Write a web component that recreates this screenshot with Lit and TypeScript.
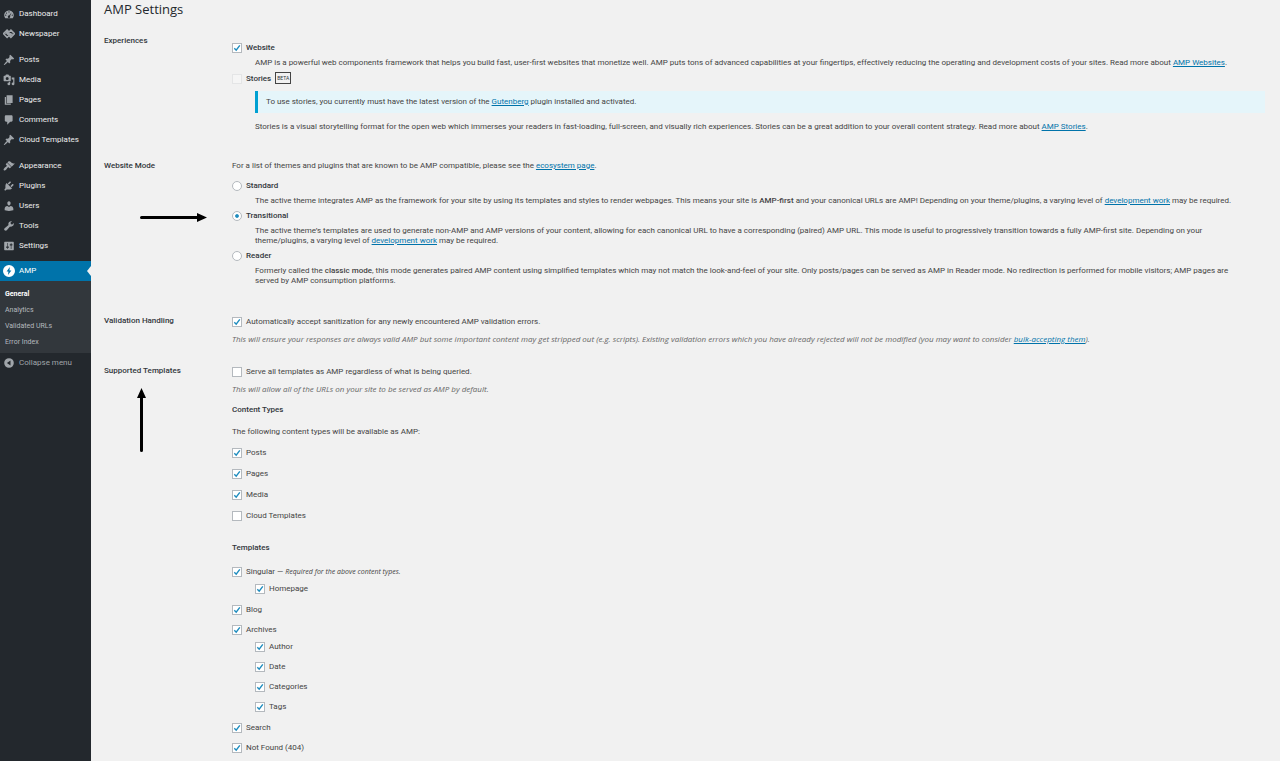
import { LitElement, html, svg, css } from "lit";
import { customElement, property } from "lit/decorators.js";

const icons: Record<string, unknown> = {
  dashboard: svg`<path fill-rule="evenodd" d="M3.76 17h12.48c1.1-1.37 1.76-3.11 1.76-5 0-4.42-3.58-8-8-8s-8 3.58-8 8c0 1.89.66 3.63 1.76 5zM10 5.5a1 1 0 1 1 0 2 1 1 0 0 1 0-2zM5.8 7.5a1 1 0 1 1 0 2 1 1 0 0 1 0-2zM4.5 11a1 1 0 1 1 0 2 1 1 0 0 1 0-2zM15.5 11a1 1 0 1 1 0 2 1 1 0 0 1 0-2zM14.4 7.6l-2.7 5.9a2 2 0 1 1-1.5-.9z"/>`,
  newspaper: svg`<g fill="none" stroke="currentColor" stroke-width="2.6"><path d="M6.8 3.5l6 6-6 6-6-6zM13.2 3.5l6 6-6 6-6-6z"/><path d="M4 9.5l3-3 6 6 3-3"/></g>`,
  pin: svg`<path d="M10.44 3.02l1.82-1.82 6.36 6.35-1.83 1.82c-1.05-.68-2.48-.57-3.41.36l-.75.75c-.92.93-1.04 2.35-.35 3.41l-1.83 1.82-2.41-2.41-2.8 2.79c-.42.42-3.38 2.71-3.8 2.29s1.86-3.39 2.28-3.81l2.79-2.79L4.1 9.36l1.83-1.82c1.05.69 2.48.57 3.4-.36l.75-.75c.93-.92 1.05-2.35.36-3.41z"/>`,
  media: svg`<path fill-rule="evenodd" d="M13 11V4c0-.55-.45-1-1-1h-1.67L9 1H5L3.67 3H2c-.55 0-1 .45-1 1v7c0 .55.45 1 1 1h10c.55 0 1-.45 1-1zM7 5a2.500 2.500 0 1 1 0 5 2.500 2.500 0 0 1 0-5z"/><path d="M14.500 6H19v10.500a2.300 2.300 0 1 1-2-2.300V9h-2.500zM10 14V13h2v3.500a2.300 2.300 0 1 1-2-2.300z"/>`,
  page: svg`<path d="M6 15V2h10v13H6zm-1 1h8v2H3V5h2v11z"/>`,
  comment: svg`<path d="M5 2h9c1.1 0 2 .9 2 2v7c0 1.1-.9 2-2 2h-2l-5 5v-5H5c-1.1 0-2-.9-2-2V4c0-1.1.9-2 2-2z"/>`,
  brush: svg`<path d="M14.48 11.06L7.41 3.99l1.5-1.5c.5-.56 2.3-.47 3.51.32 1.21.8 1.43 1.28 2.91 2.1 1.18.64 2.45 1.26 4.45.85zm-.71.71L6.7 4.7 4.93 6.47c-.39.39-.39 1.02 0 1.41l1.06 1.06c.39.39.39 1.03 0 1.42-.6.6-1.43 1.11-2.21 1.69-.35.26-.7.53-1.01.84C1.43 14.23.4 16.08 1.4 17.07c.99 1 2.84-.03 4.18-1.36.31-.31.58-.66.85-1.02.57-.78 1.08-1.61 1.69-2.21.39-.39 1.02-.39 1.41 0l1.06 1.06c.39.39 1.02.39 1.41 0z"/>`,
  plug: svg`<path d="M13.11 4.36L9.87 7.6 8 5.73l3.24-3.24c.35-.34 1.05-.2 1.56.32.52.51.66 1.21.31 1.55zm-8 1.77l.91-1.12 9.01 9.01-1.19.84c-.71.71-2.63 1.16-3.82 1.16H6.14L4.9 17.26c-.59.59-1.54.59-2.12 0-.59-.58-.59-1.53 0-2.12l1.24-1.24v-3.88c0-1.13.4-3.19 1.09-3.89zm7.26 3.97l3.24-3.24c.34-.35 1.04-.21 1.55.31.52.51.66 1.21.31 1.55l-3.24 3.25z"/>`,
  user: svg`<path d="M10 9.25c-2.27 0-2.73-3.44-2.73-3.44C7 4.02 7.82 2 9.97 2c2.16 0 2.98 2.02 2.71 3.81 0 0-.41 3.44-2.68 3.44zm0 2.57L12.72 10c2.39 0 4.52 2.33 4.52 4.53v2.49s-3.65 1.13-7.24 1.13c-3.65 0-7.24-1.13-7.24-1.13v-2.49c0-2.25 1.94-4.48 4.47-4.48z"/>`,
  wrench: svg`<path d="M16.68 9.77c-1.34 1.34-3.3 1.67-4.95.99l-5.41 6.52c-.99.99-2.59.99-3.58 0s-.99-2.59 0-3.57l6.52-5.42c-.68-1.65-.35-3.61.99-4.95 1.28-1.28 3.12-1.62 4.72-1.06l-2.89 2.89 2.82 2.82 2.86-2.87c.53 1.58.18 3.39-1.08 4.65z"/>`,
  sliders: svg`<path fill-rule="evenodd" d="M18 16V4c0-.55-.45-1-1-1H3c-.55 0-1 .45-1 1v12c0 .55.45 1 1 1h14c.55 0 1-.45 1-1zM8 11h1c.55 0 1 .45 1 1s-.45 1-1 1H8v1.5c0 .28-.22.5-.5.5s-.5-.22-.5-.5V13H6c-.55 0-1-.45-1-1s.45-1 1-1h1V5.5c0-.28.22-.5.5-.5s.5.22.5.5V11zm5-2h-1c-.55 0-1-.45-1-1s.45-1 1-1h1V5.5c0-.28.22-.5.5-.5s.5.22.5.5V7h1c.55 0 1 .45 1 1s-.45 1-1 1h-1v5.5c0 .28-.22.5-.5.5s-.5-.22-.5-.5V9z"/>`,
  amp: svg`<path fill-rule="evenodd" d="M10 0a10 10 0 1 1 0 20 10 10 0 0 1 0-20zm1.4 3.5L6 11h3l-.7 5.5L14 9h-3.2z"/>`,
  collapse: svg`<path fill-rule="evenodd" d="M10 2a8 8 0 1 1 0 16 8 8 0 0 1 0-16zm2.5 4L6.5 10l6 4z"/>`,
};

const menu: { icon: string; label: string }[][] = [
  [
    { icon: "dashboard", label: "Dashboard" },
    { icon: "newspaper", label: "Newspaper" },
  ],
  [
    { icon: "pin", label: "Posts" },
    { icon: "media", label: "Media" },
    { icon: "page", label: "Pages" },
    { icon: "comment", label: "Comments" },
    { icon: "pin", label: "Cloud Templates" },
  ],
  [
    { icon: "brush", label: "Appearance" },
    { icon: "plug", label: "Plugins" },
    { icon: "user", label: "Users" },
    { icon: "wrench", label: "Tools" },
    { icon: "sliders", label: "Settings" },
  ],
];

const icon = (name: string) =>
  html`<svg class="icon" viewBox="0 0 20 20" fill="currentColor" aria-hidden="true">${icons[name]}</svg>`;

@customElement("admin-menu")
class AdminMenu extends LitElement {
  static styles = css`
    :host {
      display: block;
      padding-top: 4px;
      background: #23282d;
      color: #eee;
      font-size: 8px;
      line-height: 20px;
    }
    .group + .group {
      margin-top: 6px;
    }
    .item {
      display: flex;
      align-items: center;
      gap: 4px;
      height: 20px;
      padding: 0 0 0 3px;
      color: inherit;
      text-decoration: none;
      white-space: nowrap;
    }
    .icon {
      flex: none;
      width: 12px;
      height: 12px;
      color: #a0a5aa;
    }
    .current {
      position: relative;
      margin-top: 5px;
      background: #0073aa;
      color: #fff;
    }
    .current .icon {
      color: #fff;
    }
    .current::after {
      content: "";
      position: absolute;
      right: 0;
      top: 5px;
      border: 5px solid transparent;
      border-left-width: 0;
      border-right: 4px solid #f1f1f1;
    }
    .submenu {
      padding: 5px 0 3px;
      background: #32373c;
      line-height: 16px;
    }
    .sub {
      display: block;
      padding-left: 5px;
      color: #b4b9be;
      font-size: 7px;
      text-decoration: none;
    }
    .sub.active {
      color: #fff;
      font-weight: 700;
    }
    .collapse {
      width: 100%;
      border: 0;
      background: none;
      color: #a0a5aa;
      font: inherit;
    }
  `;

  render() {
    return html`
      <nav>
        ${menu.map(
          (group) => html`<div class="group">
            ${group.map((m) => html`<a class="item" href="#">${icon(m.icon)}<span>${m.label}</span></a>`)}
          </div>`
        )}
        <a class="item current" href="#">${icon("amp")}<span>AMP</span></a>
        <div class="submenu">
          ${["General", "Analytics", "Validated URLs", "Error Index"].map(
            (label, i) => html`<a class="sub ${i === 0 ? "active" : ""}" href="#">${label}</a>`
          )}
        </div>
        <button class="item collapse" type="button">${icon("collapse")}<span>Collapse menu</span></button>
      </nav>
    `;
  }
}

@customElement("choice-field")
class ChoiceField extends LitElement {
  @property() type = "checkbox";
  @property({ type: Boolean }) checked = false;
  @property({ type: Boolean }) disabled = false;

  static styles = css`
    :host {
      display: block;
    }
    .choice {
      display: flex;
      align-items: center;
      gap: 4px;
    }
    .box {
      appearance: none;
      box-sizing: border-box;
      flex: none;
      width: 10px;
      height: 10px;
      margin: 0;
      border: 1px solid #b4b9be;
      background: #fff center / 8px 8px no-repeat;
    }
    .box[type="radio"] {
      border-radius: 50%;
    }
    .box[type="checkbox"]:checked {
      background-image: url("data:image/svg+xml,%3Csvg xmlns='http://www.w3.org/2000/svg' viewBox='0 0 8 8'%3E%3Cpath d='M1.3 4.2l1.9 2L6.8 1.3' fill='none' stroke='%231e8cbe' stroke-width='1.4'/%3E%3C/svg%3E");
    }
    .box[type="radio"]:checked {
      background-image: radial-gradient(circle, #1e8cbe 25%, transparent 40%);
    }
    .box:disabled {
      border-color: #e4e5e6;
      background-color: #f5f5f5;
    }
  `;

  render() {
    return html`<label class="choice">
      <input class="box" type=${this.type} .checked=${this.checked} ?disabled=${this.disabled} />
      <span><slot></slot></span>
    </label>`;
  }
}

const check = (label: unknown, checked = true) =>
  html`<choice-field ?checked=${checked}>${label}</choice-field>`;

@customElement("app-root")
class AppRoot extends LitElement {
  static styles = css`
    :host {
      display: grid;
      grid-template-columns: 91px minmax(0, 1fr);
      min-height: 100vh;
      background: #f1f1f1;
      color: #444;
      font-family: Roboto, "Open Sans", sans-serif;
      font-size: 8px;
      line-height: 10px;
    }
    .page {
      padding: 0 15px 0 13px;
    }
    h1,
    h2,
    h3,
    p {
      margin: 0;
      font-size: inherit;
      font-weight: inherit;
    }
    h1 {
      margin-bottom: 18px;
      color: #23282d;
      font-family: "Open Sans", sans-serif;
      font-size: 13px;
      line-height: 18px;
    }
    h2,
    h3 {
      color: #32373c;
      font-weight: 500;
    }
    a {
      color: #0073aa;
    }
    b {
      font-weight: 500;
    }
    .section {
      display: grid;
      grid-template-columns: 128px minmax(0, 1fr);
    }
    .heading {
      position: relative;
    }
    .experiences {
      margin-bottom: 29px;
    }
    .mode {
      margin-bottom: 30px;
    }
    .validation {
      margin-bottom: 22px;
    }
    .experiences .fields {
      padding-top: 7px;
    }
    .indent {
      padding: 0 20px 0 23px;
    }
    .option {
      color: #32373c;
      font-weight: 500;
    }
    .option + .indent {
      margin-top: 5px;
    }
    .indent + .option {
      margin-top: 5px;
    }
    .intro {
      margin-bottom: 10px;
    }
    .beta {
      margin-left: 2px;
      padding: 2px 1px;
      border: 1px solid #444;
      font-size: 5px;
      font-weight: 400;
      vertical-align: 1px;
    }
    .notice {
      margin: 7px 0 9px 23px;
      padding: 6px 8px;
      border-left: 3px solid #00a0d2;
      background: #e5f5fa;
    }
    .help {
      margin-top: 7px;
      color: #666;
      font-family: "Open Sans", sans-serif;
      font-style: italic;
    }
    .top {
      padding-top: 1px;
    }
    h3 {
      margin: 11px 0 12px;
    }
    .stack {
      display: grid;
      gap: 11px;
      margin: 11px 0 22px;
    }
    h3.templates {
      margin-bottom: 14px;
    }
    .tree {
      display: grid;
      gap: 10px;
    }
    .children {
      display: grid;
      gap: 10px;
      padding: 7px 0 1px 23px;
    }
    .note {
      font-family: "Open Sans", sans-serif;
      font-size: 7px;
    }
    .arrow {
      position: absolute;
      fill: #000;
    }
    .right {
      left: 36px;
      top: 51px;
      width: 67px;
      height: 11px;
    }
    .up {
      left: 32px;
      top: 22px;
      width: 11px;
      height: 65px;
    }
  `;

  mode(label: string, selected: boolean, text: unknown) {
    return html`<choice-field class="option" type="radio" ?checked=${selected}>${label}</choice-field>
      <p class="indent">${text}</p>`;
  }

  render() {
    return html`
      <admin-menu></admin-menu>
      <main class="page">
        <h1>AMP Settings</h1>

        <section class="section experiences">
          <div class="heading"><h2>Experiences</h2></div>
          <div class="fields">
            <choice-field class="option" checked>Website</choice-field>
            <p class="indent">
              AMP is a powerful web components framework that helps you build fast, user-first websites that monetize
              well. AMP puts tons of advanced capabilities at your fingertips, effectively reducing the operating and
              development costs of your sites. Read more about <a href="#">AMP Websites</a>.
            </p>
            <choice-field class="option" disabled>Stories <span class="beta">BETA</span></choice-field>
            <div class="notice">
              To use stories, you currently must have the latest version of the <a href="#">Gutenberg</a> plugin
              installed and activated.
            </div>
            <p class="indent">
              Stories is a visual storytelling format for the open web which immerses your readers in fast-loading,
              full-screen, and visually rich experiences. Stories can be a great addition to your overall content
              strategy. Read more about <a href="#">AMP Stories</a>.
            </p>
          </div>
        </section>

        <section class="section mode">
          <div class="heading">
            <h2>Website Mode</h2>
            <svg class="arrow right" viewBox="0 0 67 11" aria-hidden="true">
              <path d="M1.5 4H57V1l10 4.5L57 10V7H1.5a1.5 1.5 0 0 1 0-3z" />
            </svg>
          </div>
          <div>
            <p class="intro">
              For a list of themes and plugins that are known to be AMP compatible, please see the
              <a href="#">ecosystem page</a>.
            </p>
            ${this.mode(
              "Standard",
              false,
              html`The active theme integrates AMP as the framework for your site by using its templates and styles to
                render webpages. This means your site is <b>AMP-first</b> and your canonical URLs are AMP! Depending on
                your theme/plugins, a varying level of <a href="#">development work</a> may be required.`
            )}
            ${this.mode(
              "Transitional",
              true,
              html`The active theme’s templates are used to generate non-AMP and AMP versions of your content, allowing
                for each canonical URL to have a corresponding (paired) AMP URL. This mode is useful to progressively
                transition towards a fully AMP-first site. Depending on your theme/plugins, a varying level of
                <a href="#">development work</a> may be required.`
            )}
            ${this.mode(
              "Reader",
              false,
              html`Formerly called the <b>classic mode</b>, this mode generates paired AMP content using simplified
                templates which may not match the look-and-feel of your site. Only posts/pages can be served as AMP in
                Reader mode. No redirection is performed for mobile visitors; AMP pages are served by AMP consumption
                platforms.`
            )}
          </div>
        </section>

        <section class="section validation">
          <div class="heading"><h2>Validation Handling</h2></div>
          <div class="top">
            ${check("Automatically accept sanitization for any newly encountered AMP validation errors.")}
            <p class="help">
              This will ensure your responses are always valid AMP but some important content may get stripped out (e.g.
              scripts). Existing validation errors which you have already rejected will not be modified (you may want to
              consider <a href="#">bulk-accepting them</a>).
            </p>
          </div>
        </section>

        <section class="section">
          <div class="heading">
            <h2>Supported Templates</h2>
            <svg class="arrow up" viewBox="0 0 11 65" aria-hidden="true">
              <path d="M4 62.5V10H1L5.5 0 10 10H7v52.5a1.5 1.5 0 0 1-3 0z" />
            </svg>
          </div>
          <div class="top">
            ${check("Serve all templates as AMP regardless of what is being queried.", false)}
            <p class="help">This will allow all of the URLs on your site to be served as AMP by default.</p>
            <h3>Content Types</h3>
            <p>The following content types will be available as AMP:</p>
            <div class="stack">
              ${check("Posts")} ${check("Pages")} ${check("Media")} ${check("Cloud Templates", false)}
            </div>
            <h3 class="templates">Templates</h3>
            <div class="tree">
              <div>
                ${check(html`Singular — <em class="note">Required for the above content types.</em>`)}
                <div class="children">${check("Homepage")}</div>
              </div>
              ${check("Blog")}
              <div>
                ${check("Archives")}
                <div class="children">
                  ${check("Author")} ${check("Date")} ${check("Categories")} ${check("Tags")}
                </div>
              </div>
              ${check("Search")} ${check("Not Found (404)")}
            </div>
          </div>
        </section>
      </main>
    `;
  }
}
